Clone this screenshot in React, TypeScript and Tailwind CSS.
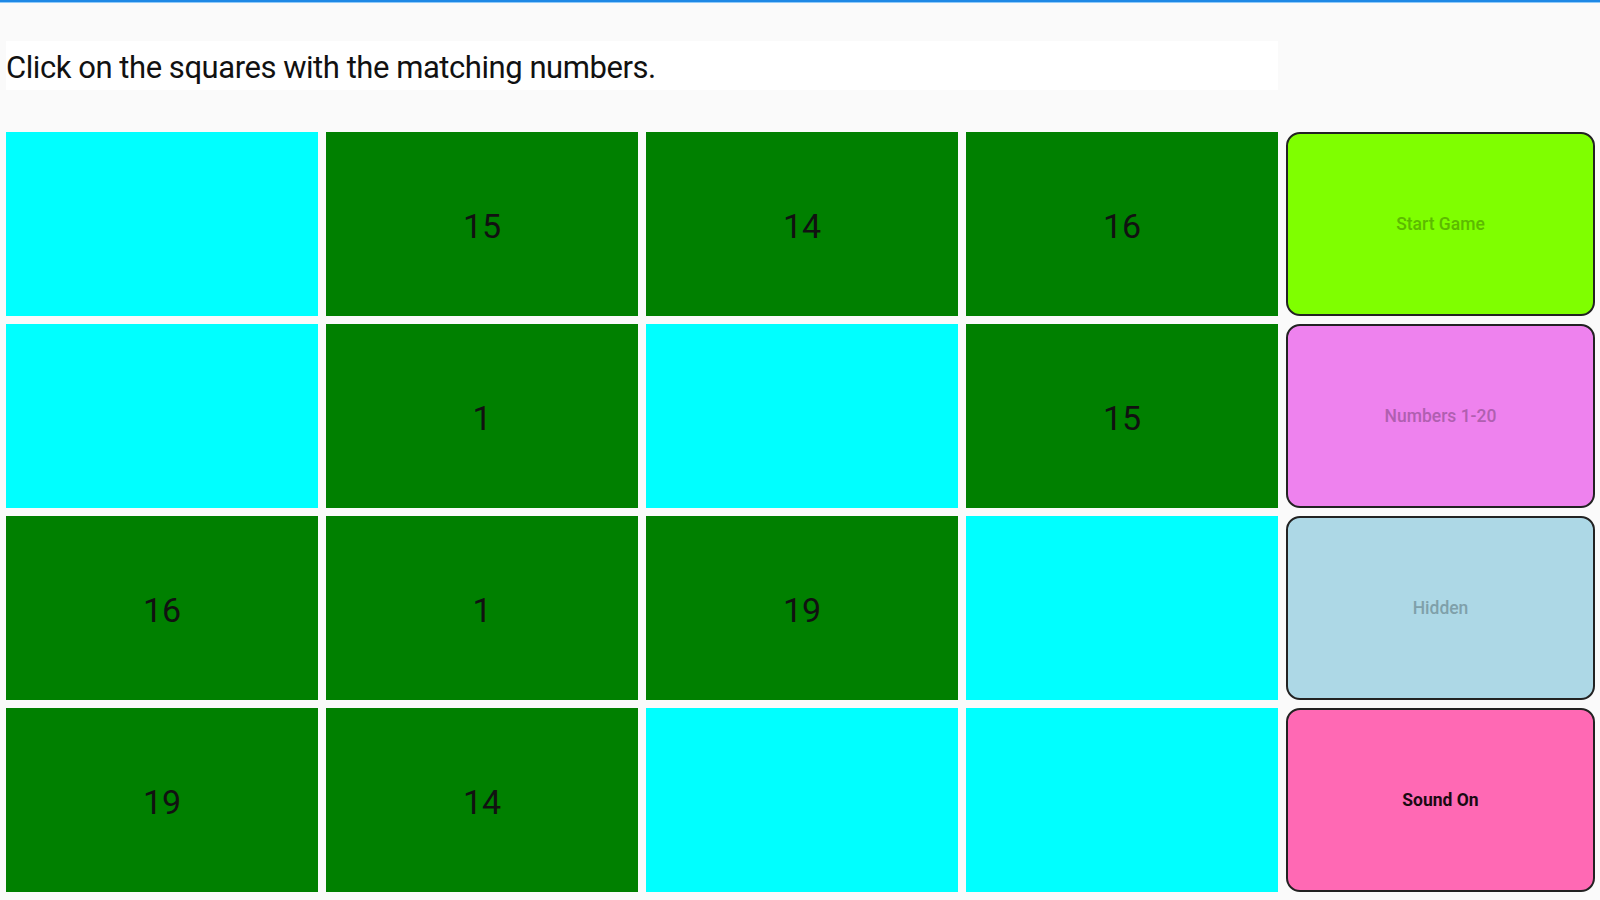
const cells: (number | null)[][] = [
	[null, 15, 14, 16],
	[null, 1, null, 15],
	[16, 1, 19, null],
	[19, 14, null, null],
];

const buttons = [
	{ label: "Start Game", sx: "bg-[#7fff00] text-[#5cba00] font-medium" },
	{ label: "Numbers 1-20", sx: "bg-[#ee82ee] text-[#b05fb0] font-medium" },
	{ label: "Hidden", sx: "bg-[#add8e6] text-[#7fa0aa] font-medium" },
	{ label: "Sound On", sx: "bg-[#ff69b4] text-[#1a0a12] font-bold" },
];

const App = () => {
	return (
		<div className="w-[1600px] h-[900px] bg-[#fafafa] overflow-hidden font-['Roboto','Liberation_Sans',sans-serif]">
			<div className="h-[3px] bg-[#1e88e5] border-b border-[#90caf9]" />

			<div className="mt-[38px] ml-[6px] w-[1272px] h-[49px] bg-white flex items-center pt-[3px]">
				<p className="text-[31px] leading-none text-[#111] tracking-[-0.45px]">Click on the squares with the matching numbers.</p>
			</div>

			<div className="mt-[42px] pl-[6px] grid grid-cols-[repeat(4,312px)_309px] auto-rows-[184px] gap-x-2 gap-y-2">
				{cells.map((row, r) => (
					<>
						{row.map((n, c) => (
							<div key={`${r}-${c}`} className={`flex items-center justify-center ${n === null ? "bg-[#00ffff]" : "bg-[#008000]"}`}>
								{n !== null && <span className="text-[34px] leading-none text-[#111] pt-[3px]">{n}</span>}
							</div>
						))}
						<button key={`b-${r}`} className={`flex items-center justify-center rounded-[14px] border-2 border-[#222] text-[17.5px] ${buttons[r].sx}`}>
							{buttons[r].label}
						</button>
					</>
				))}
			</div>
		</div>
	);
};

export default App;
